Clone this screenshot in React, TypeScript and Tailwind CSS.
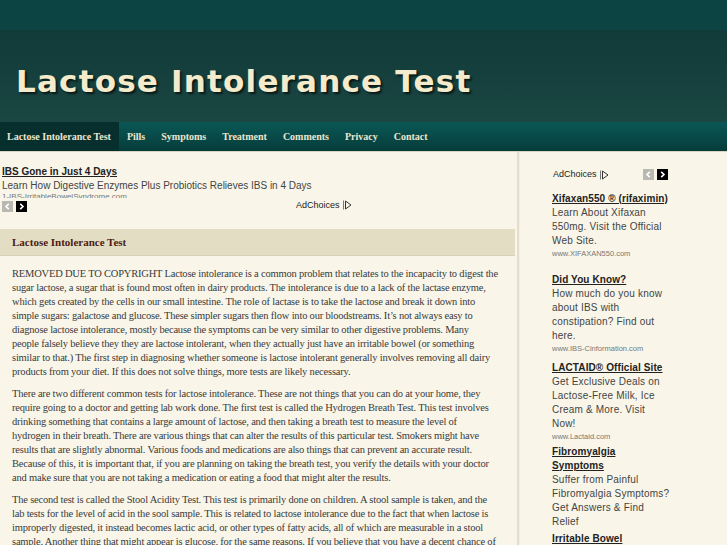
import React from 'react';

const navItems = ['Lactose Intolerance Test', 'Pills', 'Symptoms', 'Treatment', 'Comments', 'Privacy', 'Contact'];

const sideAds = [
  { title: 'Xifaxan550 ® (rifaximin)', text: 'Learn About Xifaxan 550mg. Visit the Official Web Site.', url: 'www.XIFAXAN550.com', h: 'h-[81px]' },
  { title: 'Did You Know?', text: 'How much do you know about IBS with constipation? Find out here.', url: 'www.IBS-Cinformation.com', h: 'h-[88px]' },
  { title: 'LACTAID® Official Site', text: 'Get Exclusive Deals on Lactose-Free Milk, Ice Cream & More. Visit Now!', url: 'www.Lactaid.com', h: 'h-[84px]' },
  { title: 'Fibromyalgia Symptoms', text: 'Suffer from Painful Fibromyalgia Symptoms? Get Answers & Find Relief', url: 'fibrolivinghelp.com', h: 'h-[87px]' },
  { title: 'Irritable Bowel', text: 'Syndrome', url: '', h: 'h-[40px]' },
];

const paragraphs = [
  [
    'REMOVED DUE TO COPYRIGHT Lactose intolerance is a common problem that relates to the incapacity to digest the',
    'sugar lactose, a sugar that is found most often in dairy products. The intolerance is due to a lack of the lactase enzyme,',
    'which gets created by the cells in our small intestine. The role of lactase is to take the lactose and break it down into',
    'simple sugars: galactose and glucose. These simpler sugars then flow into our bloodstreams. It’s not always easy to',
    'diagnose lactose intolerance, mostly because the symptoms can be very similar to other digestive problems. Many',
    'people falsely believe they they are lactose intolerant, when they actually just have an irritable bowel (or something',
    'similar to that.) The first step in diagnosing whether someone is lactose intolerant generally involves removing all dairy',
    'products from your diet. If this does not solve things, more tests are likely necessary.',
  ],
  [
    'There are two different common tests for lactose intolerance. These are not things that you can do at your home, they',
    'require going to a doctor and getting lab work done. The first test is called the Hydrogen Breath Test. This test involves',
    'drinking something that contains a large amount of lactose, and then taking a breath test to measure the level of',
    'hydrogen in their breath. There are various things that can alter the results of this particular test. Smokers might have',
    'results that are slightly abnormal. Various foods and medications are also things that can prevent an accurate result.',
    'Because of this, it is important that, if you are planning on taking the breath test, you verify the details with your doctor',
    'and make sure that you are not taking a medication or eating a food that might alter the results.',
  ],
  [
    'The second test is called the Stool Acidity Test. This test is primarily done on children. A stool sample is taken, and the',
    'lab tests for the level of acid in the sool sample. This is related to lactose intolerance due to the fact that when lactose is',
    'improperly digested, it instead becomes lactic acid, or other types of fatty acids, all of which are measurable in a stool',
    'sample. Another thing that might appear is glucose, for the same reasons. If you believe that you have a decent chance of',
    'being lactose intolerant, you should consult your doctor.',
  ],
];

function AdChoicesIcon() {
  return (
    <svg width="9" height="10" viewBox="0 0 9 10" className="inline-block ml-[3px]">
      <path d="M0.5 0.5 V9.5" stroke="#777" strokeWidth="1" />
      <path d="M2.5 1 L8 5 L2.5 9 Z" fill="none" stroke="#333" strokeWidth="1" />
    </svg>
  );
}

function Arrows() {
  return (
    <div className="flex gap-[3px]">
      <div className="w-[11px] h-[11px] bg-[#b9b9b2] flex items-center justify-center">
        <svg width="7" height="7" viewBox="0 0 7 7"><path d="M4.8 0.8 L2 3.5 L4.8 6.2" fill="none" stroke="#fff" strokeWidth="1.6" /></svg>
      </div>
      <div className="w-[11px] h-[11px] bg-black flex items-center justify-center">
        <svg width="7" height="7" viewBox="0 0 7 7"><path d="M2.2 0.8 L5 3.5 L2.2 6.2" fill="none" stroke="#fff" strokeWidth="1.6" /></svg>
      </div>
    </div>
  );
}

export default function App() {
  return (
    <div className="w-[727px] h-[545px] overflow-hidden bg-[#f9f6e9] flex flex-col">
      {/* Header */}
      <div className="h-[30px] bg-[#0c4443] shrink-0" />
      <div className="h-[92px] shrink-0 bg-gradient-to-b from-[#103b38] via-[#15403d] to-[#1b4743] flex items-center pl-[16px] pt-[10px]">
        <h1
          className="text-[31px] font-bold tracking-[1.2px] text-[#f3ebcb] leading-none"
          style={{ fontFamily: '"DejaVu Sans", sans-serif', textShadow: '2px 2px 2px #0a1a18' }}
        >
          Lactose Intolerance Test
        </h1>
      </div>
      <nav
        className="h-[30px] shrink-0 flex bg-gradient-to-b from-[#0a5856] via-[#084a48] to-[#063c3a] border-b border-[#d8d4bf]"
        style={{ fontFamily: '"Liberation Serif", serif' }}
      >
        {navItems.map((item, i) => (
          <a
            key={item}
            className={
              'flex items-center text-[10px] font-bold text-[#ece6cf] ' +
              (i === 0 ? 'bg-[#072f2d] pl-[7px] pr-[8px]' : 'px-[8px]')
            }
          >
            {item}
          </a>
        ))}
      </nav>

      {/* Body */}
      <div className="flex flex-1 min-h-0">
        {/* Main column */}
        <div className="w-[517px] shrink-0 flex flex-col">
          <div className="shrink-0 pl-[2px] pt-[14px] h-[62px]" style={{ fontFamily: '"Liberation Sans", Arial, sans-serif' }}>
            <div className="text-[10px] font-bold underline text-[#222] leading-[12px]">IBS Gone in Just 4 Days</div>
            <div className="text-[10px] text-[#444] leading-[13px] mt-[1px]">Learn How Digestive Enzymes Plus Probiotics Relieves IBS in 4 Days</div>
            <div className="text-[8px] text-[#777] leading-[9px] h-[6px] overflow-hidden">1-IBS-IrritableBowelSyndrome.com</div>
            <div className="flex items-start">
              <div className="mt-[3px]">
                <Arrows />
              </div>
              <div className="ml-[269px] mt-[2px] text-[9px] leading-[10px] text-[#222] flex items-center">
                AdChoices
                <AdChoicesIcon />
              </div>
            </div>
          </div>

          <div className="shrink-0 mt-[15px] h-[27px] mr-[2px] bg-[#e3dec3] border-b border-[#d6d1b8] flex items-center pl-[12px]">
            <h2 className="text-[11px] font-bold text-[#4a1b18]" style={{ fontFamily: '"Liberation Serif", serif' }}>
              Lactose Intolerance Test
            </h2>
          </div>

          <div
            className="shrink-0 pl-[12px] pt-[11px] text-[10.5px] leading-[14px] text-[#3a3a3a] tracking-[-0.2px] space-y-[8px] whitespace-nowrap"
            style={{ fontFamily: '"Liberation Serif", serif' }}
          >
            {paragraphs.map((lines, i) => (
              <p key={i}>
                {lines.map((l, j) => (
                  <span key={j} className="block">{l}</span>
                ))}
              </p>
            ))}
          </div>
        </div>

        {/* Divider */}
        <div className="w-[2px] shrink-0 bg-[#e2dfcc]" />
        <div className="w-[1px] shrink-0 bg-[#f3f0e2]" />

        {/* Sidebar */}
        <aside className="flex-1 pl-[32px] pt-[16px]" style={{ fontFamily: '"Liberation Sans", Arial, sans-serif' }}>
          <div className="flex items-center w-[116px] justify-between">
            <div className="flex items-center text-[9px] text-[#222] ml-[1px]">
              AdChoices
              <AdChoicesIcon />
            </div>
            <Arrows />
          </div>
          <div className="mt-[10px]">
            {sideAds.map((ad) => (
              <div key={ad.title} className={ad.h + ' overflow-hidden w-[118px]'}>
                <div className="text-[10px] font-bold underline text-[#222] leading-[14px] tracking-[0.1px]">{ad.title}</div>
                <div className="text-[10px] text-[#444] leading-[14px] tracking-[0.2px]">{ad.text}</div>
                {ad.url && <div className="text-[7.5px] text-[#777] leading-[11px]">{ad.url}</div>}
              </div>
            ))}
          </div>
        </aside>
      </div>
    </div>
  );
}
